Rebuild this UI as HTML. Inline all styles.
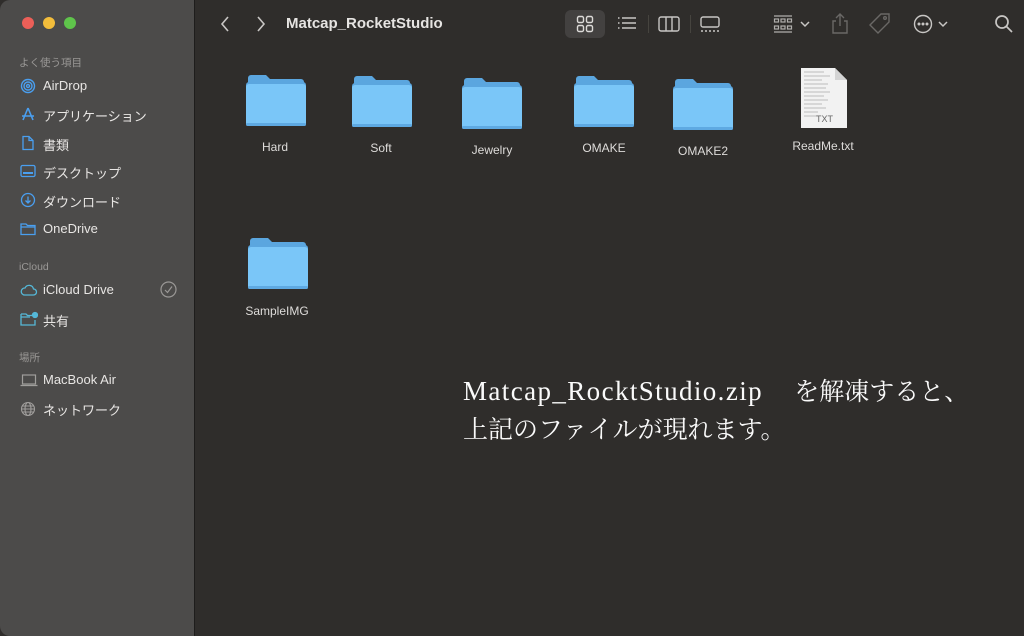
<!DOCTYPE html>
<html><head><meta charset="utf-8"><style>
*{margin:0;padding:0;box-sizing:border-box}
body{width:1024px;height:636px;overflow:hidden;background:#2f2d2b;font-family:"Liberation Sans","Noto Sans CJK JP",sans-serif;position:relative}
.sb{position:absolute;left:0;top:0;width:195px;height:636px;background:#4c4b4a;border-right:1px solid #1e1d1c;border-radius:10px 0 0 10px}
.dot{position:absolute;top:17px;width:12px;height:12px;border-radius:50%}
.sec{position:absolute;left:19px;font-size:10.5px;color:#9a9896}
.it{position:absolute;left:43px;font-size:13px;color:#e8e6e4}
.ic{position:absolute;left:20px}
.t{position:absolute;color:#dedcda;font-size:12px;text-align:center;width:100px}
.f{position:absolute}
.tb{position:absolute}
.lat{font-size:27px;letter-spacing:1.4px}
</style></head><body>
<div class="sb">
<div class="dot" style="left:22px;background:#ec5f58"></div>
<div class="dot" style="left:43px;background:#f3bd3b"></div>
<div class="dot" style="left:64px;background:#5fc44b"></div>
<div class="sec" style="top:55px">よく使う項目</div>
<svg class="ic" style="top:78px" width="16" height="16" viewBox="0 0 16 16" fill="none" stroke="#4a9ff0" stroke-width="1.4"><circle cx="8" cy="8" r="6.5"/><circle cx="8" cy="8" r="4"/><circle cx="8" cy="8" r="1.5"/></svg>
<div class="it" style="top:78px">AirDrop</div>
<svg class="ic" style="top:106px" width="16" height="16" viewBox="0 0 16 16" fill="none" stroke="#4a9ff0" stroke-width="1.6"><path d="M8 2L3 14M8 2l5 12M2 10h12"/></svg>
<div class="it" style="top:106px">アプリケーション</div>
<svg class="ic" style="top:135px" width="16" height="16" viewBox="0 0 16 16" fill="none" stroke="#4a9ff0" stroke-width="1.3"><path d="M3 1.5h6l4 4v9H3z M9 1.5v4h4"/></svg>
<div class="it" style="top:135px">書類</div>
<svg class="ic" style="top:163px" width="16" height="16" viewBox="0 0 16 16" fill="none" stroke="#4a9ff0" stroke-width="1.3"><rect x="1" y="2.5" width="14" height="11" rx="1.5"/><path d="M3 10h10" stroke-width="2"/></svg>
<div class="it" style="top:163px">デスクトップ</div>
<svg class="ic" style="top:192px" width="16" height="16" viewBox="0 0 16 16" fill="none" stroke="#4a9ff0" stroke-width="1.3"><circle cx="8" cy="8" r="6.5"/><path d="M8 4.5v6M5.5 8.5L8 11l2.5-2.5"/></svg>
<div class="it" style="top:192px">ダウンロード</div>
<svg class="ic" style="top:221px" width="16" height="16" viewBox="0 0 16 16" fill="none" stroke="#4a9ff0" stroke-width="1.3"><path d="M1 3h5l1.5 1.5H15v9H1z M1 6h14"/></svg>
<div class="it" style="top:221px">OneDrive</div>
<div class="sec" style="top:261px">iCloud</div>
<svg class="ic" style="top:282px" width="18" height="16" viewBox="0 0 18 16" fill="none" stroke="#55b8d8" stroke-width="1.3"><path d="M4.5 13h9a3 3 0 000-6 4.5 4.5 0 00-8.5-1A3.5 3.5 0 004.5 13z"/></svg>
<div class="it" style="top:282px">iCloud Drive</div>
<svg style="position:absolute;left:160px;top:281px" width="17" height="17" viewBox="0 0 17 17" fill="none" stroke="#9a9896" stroke-width="1.2"><circle cx="8.5" cy="8.5" r="7.5"/><path d="M5 9l2.5 2.5L12 5.5"/></svg>
<svg class="ic" style="top:311px" width="18" height="16" viewBox="0 0 18 16" fill="none" stroke="#55b8d8" stroke-width="1.3"><path d="M1 3h5l1.5 1.5H12 M15 9v5H1V3 M1 6h9"/><circle cx="15" cy="4" r="2.5" fill="#55b8d8"/></svg>
<div class="it" style="top:311px">共有</div>
<div class="sec" style="top:350px">場所</div>
<svg class="ic" style="top:373px" width="18" height="14" viewBox="0 0 18 14" fill="none" stroke="#a09e9c" stroke-width="1.2"><rect x="2.5" y="2" width="13" height="9"/><path d="M0.5 12.5h17"/></svg>
<div class="it" style="top:372px">MacBook Air</div>
<svg class="ic" style="top:401px" width="16" height="16" viewBox="0 0 16 16" fill="none" stroke="#a09e9c" stroke-width="1.1"><circle cx="8" cy="8" r="6.5"/><ellipse cx="8" cy="8" rx="3" ry="6.5"/><path d="M1.5 8h13M2.5 5h11M2.5 11h11"/></svg>
<div class="it" style="top:400px">ネットワーク</div>
</div>

<svg class="tb" style="left:218px;top:15px" width="14" height="18" viewBox="0 0 14 18" fill="none" stroke="#c8c6c4" stroke-width="1.6"><path d="M10 2L4 9l6 7"/></svg>
<svg class="tb" style="left:254px;top:15px" width="14" height="18" viewBox="0 0 14 18" fill="none" stroke="#c8c6c4" stroke-width="1.6"><path d="M4 2l6 7-6 7"/></svg>
<div style="position:absolute;left:286px;top:15px;font-size:15px;font-weight:bold;color:#e6e4e2">Matcap_RocketStudio</div>
<div style="position:absolute;left:565px;top:10px;width:40px;height:28px;background:#434140;border-radius:6px"></div>
<svg class="tb" style="left:576px;top:15px" width="18" height="18" viewBox="0 0 18 18" fill="none" stroke="#dcdad8" stroke-width="1.4"><rect x="1.5" y="1.5" width="6" height="6" rx="1.5"/><rect x="10.5" y="1.5" width="6" height="6" rx="1.5"/><rect x="1.5" y="10.5" width="6" height="6" rx="1.5"/><rect x="10.5" y="10.5" width="6" height="6" rx="1.5"/></svg>
<svg class="tb" style="left:617px;top:16px" width="20" height="16" viewBox="0 0 20 16" fill="none" stroke="#c8c6c4" stroke-width="1.4"><path d="M5 2h14M5 7h14M5 12h14M1 2h1.5M1 7h1.5M1 12h1.5"/></svg>
<div style="position:absolute;left:648px;top:15px;width:1px;height:18px;background:#46443f"></div>
<svg class="tb" style="left:658px;top:15px" width="22" height="18" viewBox="0 0 22 18" fill="none" stroke="#c8c6c4" stroke-width="1.4"><rect x="1" y="2" width="20" height="14" rx="2"/><path d="M8 2v14M14 2v14"/></svg>
<div style="position:absolute;left:690px;top:15px;width:1px;height:18px;background:#46443f"></div>
<svg class="tb" style="left:699px;top:15px" width="22" height="18" viewBox="0 0 22 18" fill="none" stroke="#c8c6c4" stroke-width="1.4"><rect x="2" y="2" width="18" height="10" rx="2"/><path d="M2 16h2M6 16h2M10 16h2M14 16h2M18 16h2"/></svg>
<svg class="tb" style="left:773px;top:14px" width="20" height="20" viewBox="0 0 20 20" fill="none" stroke="#b0aeac" stroke-width="1.2"><path d="M1 2h18M1 18h18"/><rect x="1.5" y="5" width="4" height="3"/><rect x="8" y="5" width="4" height="3"/><rect x="14.5" y="5" width="4" height="3"/><rect x="1.5" y="12" width="4" height="3"/><rect x="8" y="12" width="4" height="3"/><rect x="14.5" y="12" width="4" height="3"/></svg>
<svg class="tb" style="left:799px;top:19px" width="12" height="10" viewBox="0 0 12 10" fill="none" stroke="#c8c6c4" stroke-width="1.5"><path d="M2 3l4 4 4-4"/></svg>
<svg class="tb" style="left:830px;top:12px" width="20" height="22" viewBox="0 0 20 22" fill="none" stroke="#6a6866" stroke-width="1.4"><path d="M10 2v12M6 6l4-4 4 4M6 9H3v12h14V9h-3"/></svg>
<svg class="tb" style="left:868px;top:12px" width="24" height="24" viewBox="0 0 24 24" fill="none" stroke="#6a6866" stroke-width="1.4"><path d="M13 2h8v8L10 21 2 13z"/><circle cx="17" cy="6" r="1.3"/></svg>
<svg class="tb" style="left:913px;top:14px" width="20" height="20" viewBox="0 0 20 20" fill="none" stroke="#c8c6c4" stroke-width="1.4"><circle cx="10" cy="10" r="8.5"/><circle cx="6" cy="10" r="0.8" fill="#c8c6c4"/><circle cx="10" cy="10" r="0.8" fill="#c8c6c4"/><circle cx="14" cy="10" r="0.8" fill="#c8c6c4"/></svg>
<svg class="tb" style="left:937px;top:19px" width="12" height="10" viewBox="0 0 12 10" fill="none" stroke="#c8c6c4" stroke-width="1.5"><path d="M2 3l4 4 4-4"/></svg>
<svg class="tb" style="left:994px;top:14px" width="20" height="20" viewBox="0 0 20 20" fill="none" stroke="#c8c6c4" stroke-width="1.7"><circle cx="8" cy="8" r="6"/><path d="M12.5 12.5L18 18"/></svg>

<svg width="0" height="0" style="position:absolute"><defs><symbol id="fd" viewBox="0 0 60 52"><path d="M2 4a3 3 0 013-3h15l4 4h31a3 3 0 013 3v6H2z" fill="#5ba6df"/><rect x="0" y="8" width="60" height="44" rx="3" fill="#5ba6df"/><rect x="0" y="10" width="60" height="42" rx="3" fill="#7ac6f8"/><rect x="0" y="49" width="60" height="3" rx="1.5" fill="#5ea9e2"/></symbol></defs></svg>
<svg class="f" style="left:246px;top:74px" width="60" height="52"><use href="#fd"/></svg>
<div class="t" style="left:225px;top:140px">Hard</div>
<svg class="f" style="left:352px;top:75px" width="60" height="52"><use href="#fd"/></svg>
<div class="t" style="left:331px;top:141px">Soft</div>
<svg class="f" style="left:462px;top:77px" width="60" height="52"><use href="#fd"/></svg>
<div class="t" style="left:442px;top:143px">Jewelry</div>
<svg class="f" style="left:574px;top:75px" width="60" height="52"><use href="#fd"/></svg>
<div class="t" style="left:554px;top:141px">OMAKE</div>
<svg class="f" style="left:673px;top:78px" width="60" height="52"><use href="#fd"/></svg>
<div class="t" style="left:653px;top:144px">OMAKE2</div>
<svg class="f" style="left:800px;top:67px" width="48" height="62" viewBox="0 0 48 62"><path d="M1 1h34l12 12v48H1z" fill="#f2f2f2"/><path d="M35 1v12h12" fill="#d4d4d4"/><g stroke="#aaa" stroke-width="0.7"><path d="M4 5h20M4 9h26M4 13h18M4 17h24M4 21h22M4 25h26M4 29h20M4 33h24M4 37h18M4 41h22M4 45h14M4 49h14"/></g><text x="16" y="55" font-family="Liberation Sans" font-size="9" fill="#666">TXT</text></svg>
<div class="t" style="left:773px;top:139px">ReadMe.txt</div>
<svg class="f" style="left:248px;top:237px" width="60" height="52"><use href="#fd"/></svg>
<div class="t" style="left:227px;top:304px">SampleIMG</div>

<div style="position:absolute;left:463px;top:372px;font-family:'Liberation Serif','Noto Serif CJK SC',serif;font-size:25px;line-height:38px;color:#fafafa;white-space:nowrap"><span class="lat">Matcap_RocktStudio.zip</span>　 を解凍すると、<br>上記のファイルが現れます。</div>
</body></html>
